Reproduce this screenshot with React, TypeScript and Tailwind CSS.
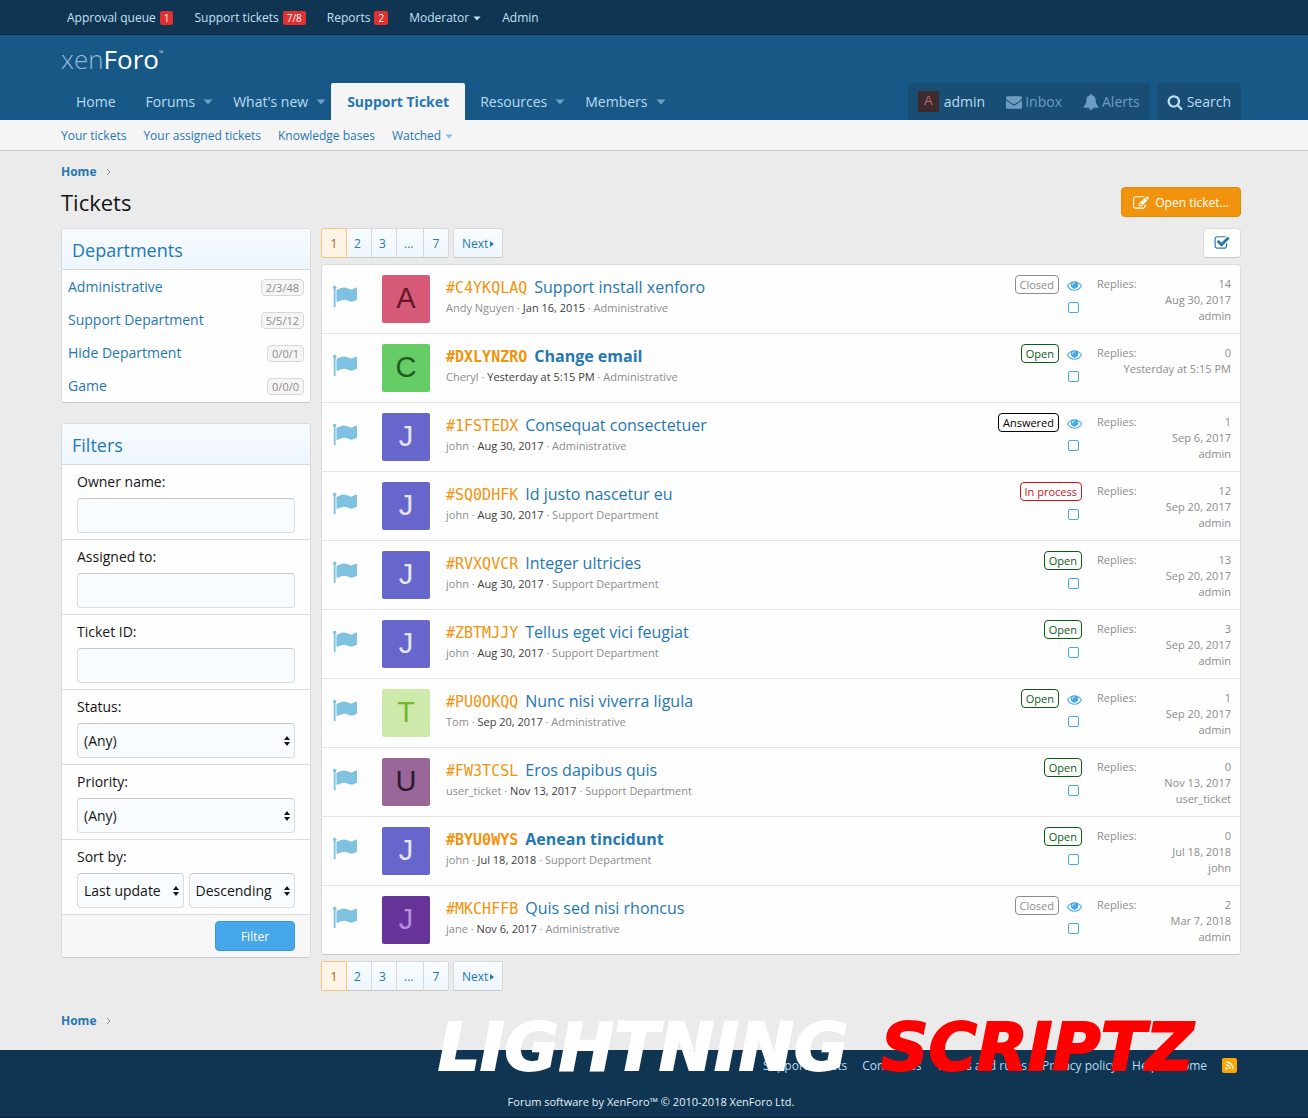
import type { ReactNode } from 'react';
import { clsx } from 'clsx';

const ICONS = {
  flag: 'M320 256q0 72-64 110v1266q0 13-9.5 22.5t-22.5 9.5h-64q-13 0-22.5-9.5t-9.5-22.5v-1266q-64-38-64-110 0-53 37.5-90.5t90.5-37.5 90.5 37.5 37.5 90.5zm1472 64v763q0 25-12.5 38.5t-39.5 27.5q-215 116-369 116-61 0-123.5-22t-108.5-48-115.5-48-142.5-22q-192 0-464 146-17 9-33 9-26 0-45-19t-19-45v-742q0-32 31-55 21-14 79-43 236-120 421-120 107 0 200 29t219 88q38 19 88 19 54 0 117.5-21t110-47 88-47 54.5-21q26 0 45 19t19 45z',
  search: 'M1216 832q0-185-131.5-316.5t-316.5-131.5-316.5 131.5-131.5 316.5 131.5 316.5 316.5 131.5 316.5-131.5 131.5-316.5zm512 832q0 52-38 90t-90 38q-54 0-90-38l-343-342q-179 124-399 124-143 0-273.5-55.5t-225-150-150-225-55.5-273.5 55.5-273.5 150-225 225-150 273.5-55.5 273.5 55.5 225 150 150 225 55.5 273.5q0 220-124 399l343 343q37 37 37 90z',
  edit: 'M888 1184l116-116-152-152-116 116v56h96v96h56zm440-720q-16-16-33 1l-350 350q-17 17-1 33t33-1l350-350q17-17 1-33zm80 594v190q0 119-84.5 203.5t-203.5 84.5h-832q-119 0-203.5-84.5t-84.5-203.5v-832q0-119 84.5-203.5t203.5-84.5h832q63 0 117 25 15 7 18 23 3 17-9 29l-49 49q-14 14-32 8-23-6-45-6h-832q-66 0-113 47t-47 113v832q0 66 47 113t113 47h832q66 0 113-47t47-113v-126q0-13 9-22l64-64q15-15 35-7t20 29zm-96-738l288 288-672 672h-288v-288zm444 132l-92 92-288-288 92-92q28-28 68-28t68 28l152 152q28 28 28 68t-28 68z',
  eye: 'M1664 960q-152-236-381-353 61 104 61 225 0 185-131.5 316.5t-316.5 131.5-316.5-131.5-131.5-316.5q0-121 61-225-229 117-381 353 133 205 333.5 326.5t434.5 121.5 434.5-121.5 333.5-326.5zm-720-384q0-20-14-34t-34-14q-125 0-214.5 89.5t-89.5 214.5q0 20 14 34t34 14 34-14 14-34q0-86 61-147t147-61q20 0 34-14t14-34zm848 384q0 34-20 69-140 230-376.5 368.5t-499.5 138.5-499.5-139-376.5-368q-20-35-20-69t20-69q140-229 376.5-368t499.5-139 499.5 139 376.5 368q20 35 20 69z',
  check: 'M1472 930v318q0 119-84.5 203.5t-203.5 84.5h-832q-119 0-203.5-84.5t-84.5-203.5v-832q0-119 84.5-203.5t203.5-84.5h832q63 0 117 25 15 7 18 23 3 17-9 29l-49 49q-10 10-23 10-3 0-9-2-23-6-45-6h-832q-66 0-113 47t-47 113v832q0 66 47 113t113 47h832q66 0 113-47t47-113v-254q0-13 9-22l64-64q10-10 23-10 6 0 12 3 20 8 20 29zm231-489l-814 814q-24 24-57 24t-57-24l-430-430q-24-24-24-57t24-57l110-110q24-24 57-24t57 24l263 263 647-647q24-24 57-24t57 24l110 110q24 24 24 57t-24 57z',
  envelope: 'M1792 710v794q0 66-47 113t-113 47h-1472q-66 0-113-47t-47-113v-794q44 49 101 87 362 246 497 345 57 42 92.5 65.5t94.5 48 110 24.5h2q51 0 110-24.5t94.5-48 92.5-65.5q170-123 498-345 57-39 100-87zm0-294q0 79-49 151t-122 123q-376 261-468 325-10 7-42.5 31t-54 38.5-52 32.5-57.5 27-50 9h-2q-23 0-50-9t-57.5-27-52-32.5-54-38.5-42.5-31q-91-64-262-182.5t-205-142.5q-62-42-117-115.5t-55-136.5q0-78 41.5-130t118.5-52h1472q65 0 112.5 47t47.5 113z',
  bell: 'M912 1696q0-16-16-16-59 0-101.5-42.5t-42.5-101.5q0-16-16-16t-16 16q0 73 51.5 124.5t124.5 51.5q16 0 16-16zm816-288q0 52-38 90t-90 38h-448q0 106-75 181t-181 75-181-75-75-181h-448q-52 0-90-38t-38-90q50-42 91-88t85-119.5 74.5-158.5 50-206 19.5-260q0-152 117-282.5t307-158.5q-8-19-8-39 0-40 28-68t68-28 68 28 28 68q0 20-8 39 190 28 307 158.5t117 282.5q0 139 19.5 260t50 206 74.5 158.5 85 119.5 91 88z',
};

function Icon({ name, className }: { name: keyof typeof ICONS; className?: string }) {
  return (
    <svg viewBox="0 0 1792 1792" className={clsx('shrink-0 fill-current', className)} aria-hidden="true">
      <path d={ICONS[name]} />
    </svg>
  );
}

function Caret({ className }: { className?: string }) {
  return (
    <svg viewBox="0 0 10 6" className={clsx('shrink-0 fill-current', className)} aria-hidden="true">
      <path d="M0.500 0.500h9L5 5.500z" />
    </svg>
  );
}

// every bar and the body share the same centred column
function Container({ className, children }: { className?: string; children: ReactNode }) {
  return <div className={clsx('mx-auto max-w-[1206px] pl-2.5 pr-4', className)}>{children}</div>;
}

const staffLinks = [
  { label: 'Approval queue', badge: '1' },
  { label: 'Support tickets', badge: '7/8' },
  { label: 'Reports', badge: '2' },
  { label: 'Moderator', caret: true },
  { label: 'Admin' },
];

const navItems = [
  { label: 'Home' },
  { label: 'Forums', caret: true },
  { label: "What's new", caret: true },
  { label: 'Support Ticket', active: true },
  { label: 'Resources', caret: true },
  { label: 'Members', caret: true },
];

const departments = [
  { name: 'Administrative', count: '2/3/48' },
  { name: 'Support Department', count: '5/5/12' },
  { name: 'Hide Department', count: '0/0/1' },
  { name: 'Game', count: '0/0/0' },
];

const avatarStyles = {
  A: 'bg-[#d75a78] text-[#5f1628]',
  C: 'bg-[#66cc66] text-[#1f5c1f]',
  J: 'bg-[#6666cc] text-[#e6e6f8]',
  T: 'bg-[#cdeaab] text-[#70b82f]',
  U: 'bg-[#996699] text-[#2b1b2e]',
  P: 'bg-[#663399] text-[#b98ce0]',
};

const statusStyles = {
  Closed: 'border-[#8c8c8c] text-[#8c8c8c]',
  Open: 'border-[#0a5c14] text-[#0a5c14]',
  Answered: 'border-black text-black',
  'In process': 'border-[#d0121b] text-[#d0121b]',
};

type Ticket = {
  id: string;
  title: string;
  user: string;
  date: string;
  dept: string;
  avatar: keyof typeof avatarStyles;
  status: keyof typeof statusStyles;
  replies: number;
  last: string;
  by?: string;
  unread?: boolean;
  watched?: boolean;
};

const tickets: Ticket[] = [
  { id: 'C4YKQLAQ', title: 'Support install xenforo', user: 'Andy Nguyen', date: 'Jan 16, 2015', dept: 'Administrative', avatar: 'A', status: 'Closed', replies: 14, last: 'Aug 30, 2017', by: 'admin', watched: true },
  { id: 'DXLYNZRO', title: 'Change email', user: 'Cheryl', date: 'Yesterday at 5:15 PM', dept: 'Administrative', avatar: 'C', status: 'Open', replies: 0, last: 'Yesterday at 5:15 PM', unread: true, watched: true },
  { id: '1FSTEDX', title: 'Consequat consectetuer', user: 'john', date: 'Aug 30, 2017', dept: 'Administrative', avatar: 'J', status: 'Answered', replies: 1, last: 'Sep 6, 2017', by: 'admin', watched: true },
  { id: 'SQ0DHFK', title: 'Id justo nascetur eu', user: 'john', date: 'Aug 30, 2017', dept: 'Support Department', avatar: 'J', status: 'In process', replies: 12, last: 'Sep 20, 2017', by: 'admin' },
  { id: 'RVXQVCR', title: 'Integer ultricies', user: 'john', date: 'Aug 30, 2017', dept: 'Support Department', avatar: 'J', status: 'Open', replies: 13, last: 'Sep 20, 2017', by: 'admin' },
  { id: 'ZBTMJJY', title: 'Tellus eget vici feugiat', user: 'john', date: 'Aug 30, 2017', dept: 'Support Department', avatar: 'J', status: 'Open', replies: 3, last: 'Sep 20, 2017', by: 'admin' },
  { id: 'PU0OKQQ', title: 'Nunc nisi viverra ligula', user: 'Tom', date: 'Sep 20, 2017', dept: 'Administrative', avatar: 'T', status: 'Open', replies: 1, last: 'Sep 20, 2017', by: 'admin', watched: true },
  { id: 'FW3TCSL', title: 'Eros dapibus quis', user: 'user_ticket', date: 'Nov 13, 2017', dept: 'Support Department', avatar: 'U', status: 'Open', replies: 0, last: 'Nov 13, 2017', by: 'user_ticket' },
  { id: 'BYU0WYS', title: 'Aenean tincidunt', user: 'john', date: 'Jul 18, 2018', dept: 'Support Department', avatar: 'J', status: 'Open', replies: 0, last: 'Jul 18, 2018', by: 'john', unread: true },
  { id: 'MKCHFFB', title: 'Quis sed nisi rhoncus', user: 'jane', date: 'Nov 6, 2017', dept: 'Administrative', avatar: 'P', status: 'Closed', replies: 2, last: 'Mar 7, 2018', by: 'admin', watched: true },
];

function StaffBar() {
  return (
    <div className="border-b border-[#0b263a] bg-[#0f3552]">
      <Container className="flex h-[34px] items-center gap-[21px] pt-0.5 text-xs text-[#c3e1f5]">
        {staffLinks.map((l, i) => (
          <a key={l.label} href="#" className={clsx('flex items-center gap-1', i === 0 && 'pl-1.5')}>
            {l.label}
            {l.badge && (
              <span className="rounded-xs bg-[#e03030] px-1 text-[10px] leading-[14px] text-white">{l.badge}</span>
            )}
            {l.caret && <Caret className="h-[5px] w-2" />}
          </a>
        ))}
      </Container>
    </div>
  );
}

function Header() {
  return (
    <header className="bg-[#185886]">
      <Container className="flex h-12 items-center">
        <a href="#" className="flex items-start text-[26px] leading-none font-light text-[#8fbadb]">
          xen<span className="font-normal text-white">Foro</span>
          <span className="text-[6px] leading-[14px] text-white">™</span>
        </a>
      </Container>
      <Container className="flex h-[37px] items-stretch justify-between">
        <nav className="flex text-sm text-[#b8dcf3]">
          {navItems.map((n) => (
            <a
              key={n.label}
              href="#"
              className={clsx(
                'flex items-center',
                n.active ? 'rounded-t-xs bg-[#f5f5f5] px-4 font-bold text-[#2577b1]' : 'pl-[15px]',
                n.caret && 'gap-2 pr-[5px]',
                n.label === 'Home' && 'pr-[15px]',
              )}
            >
              {n.label}
              {n.caret && <Caret className="h-[6px] w-[10px] text-[#6fa0c4]" />}
            </a>
          ))}
        </nav>
        <div className="flex gap-[7px] text-sm text-[#b8dcf3]">
          <div className="flex gap-[21px] rounded-t bg-[#184e74] px-2.5">
            <a href="#" className="flex items-center gap-[5px]">
              <span className="flex size-[21px] items-center justify-center bg-[#3d2b2e] font-['Liberation_Sans'] text-[13px] text-[#c0666f]">A</span>
              admin
            </a>
            <a href="#" className="flex items-center gap-[3px] text-[#6d9dc0]"><Icon name="envelope" className="size-4" />Inbox</a>
            <a href="#" className="flex items-center gap-[3px] text-[#6d9dc0]"><Icon name="bell" className="size-4" />Alerts</a>
          </div>
          <a href="#" className="flex items-center gap-1 rounded-t bg-[#184e74] px-2.5"><Icon name="search" className="size-4" />Search</a>
        </div>
      </Container>
    </header>
  );
}

function SubNav() {
  return (
    <div className="border-b border-[#cbcbcb] bg-[#f5f5f5]">
      <Container className="flex h-[30px] items-center gap-[17px] pt-0.5 text-xs text-[#2577b1]">
        <a href="#">Your tickets</a>
        <a href="#">Your assigned tickets</a>
        <a href="#">Knowledge bases</a>
        <a href="#" className="flex items-center gap-1">Watched<Caret className="h-[5px] w-2 text-[#8fb8dc]" /></a>
      </Container>
    </div>
  );
}

function Breadcrumb() {
  return (
    <div className="flex items-center gap-2.5 text-xs leading-5 font-bold text-[#2577b1]">
      <a href="#">Home</a>
      <svg viewBox="0 0 5 8" className="h-2 w-[5px] fill-none stroke-[#8c8c8c]" aria-hidden="true">
        <path d="M1 1l3 3-3 3" />
      </svg>
    </div>
  );
}

function Pagination() {
  const page = 'flex h-7 items-center border-r border-[#d8d8d8] px-[7px] pt-0.5';
  return (
    <nav className="flex gap-1 text-xs text-[#2577b1]">
      <div className="flex rounded-xs border border-[#d8d8d8] border-b-[#c8c8c8] bg-linear-to-b from-[#f8fcff] to-[#edf6fd]">
        <a href="#" className="-m-px flex h-[30px] w-[26px] items-center justify-center rounded-l-xs border border-[#f9c479] bg-[#fff4e5] pt-0.5 text-[#a3611b]">1</a>
        <a href="#" className={clsx(page, 'ml-px w-[25px]')}>2</a>
        <a href="#" className={clsx(page, 'w-[25px]')}>3</a>
        <a href="#" className={clsx(page, 'w-[27px]')}>...</a>
        <a href="#" className="flex h-7 w-6 items-center justify-center pt-0.5">7</a>
      </div>
      <a href="#" className="flex h-[30px] items-center gap-0.5 rounded-xs border border-[#d8d8d8] border-b-[#c8c8c8] bg-linear-to-b from-[#f8fcff] to-[#edf6fd] px-2 pt-0.5">
        Next
        <svg viewBox="0 0 4 6" className="h-1.5 w-1 fill-current" aria-hidden="true"><path d="M0 0l4 3-4 3z" /></svg>
      </a>
    </nav>
  );
}

function Block({ title, children }: { title: string; children: ReactNode }) {
  return (
    <section className="overflow-hidden rounded border border-[#dcdcdc] border-b-[#c8c8c8] bg-[#fefefe]">
      <h2 className="flex h-[41px] items-center border-b border-[#d8d8d8] bg-linear-to-b from-[#f7fbff] to-[#edf6fd] px-2.5 pt-0.5 text-lg text-[#2577b1]">{title}</h2>
      {children}
    </section>
  );
}

const fieldClass = 'h-[35px] w-full rounded border border-[#dcdcdc] border-t-[#c8c8c8] bg-[#f8fcff] px-1.5 text-sm text-[#141414]';

function Select({ id, label, value }: { id?: string; label?: string; value: string }) {
  return (
    <div className="relative flex-1">
      <select id={id} aria-label={label} className={clsx(fieldClass, 'block appearance-none')}>
        <option>{value}</option>
      </select>
      <svg viewBox="0 0 6 10" className="pointer-events-none absolute top-[13px] right-[5px] h-2.5 w-1.5 fill-[#141414]" aria-hidden="true">
        <path d="M0 4h6L3 0zM0 6h6L3 10z" />
      </svg>
    </div>
  );
}

function Field({ id, label, children }: { id: string; label: string; children: ReactNode }) {
  return (
    <div className="h-[75px] border-b border-[#dcdcdc] px-[15px] pt-1.5">
      <label htmlFor={id} className="block h-[27px] text-sm leading-[21px] text-[#141414]">{label}</label>
      {children}
    </div>
  );
}

function Sidebar() {
  return (
    <aside className="flex w-[250px] shrink-0 flex-col gap-5">
      <Block title="Departments">
        <ul className="text-sm text-[#2577b1]">
          {departments.map((d) => (
            <li key={d.name} className="flex h-[33px] items-center justify-between px-1.5">
              <a href="#">{d.name}</a>
              <span className="mt-0.5 rounded border border-[#d8d8d8] bg-[#f5f5f5] px-1 text-[11px] leading-[15px] text-[#8c8c8c]">{d.count}</span>
            </li>
          ))}
        </ul>
      </Block>
      <Block title="Filters">
        <form>
          <Field id="owner" label="Owner name:"><input id="owner" type="text" className={fieldClass} /></Field>
          <Field id="assigned" label="Assigned to:"><input id="assigned" type="text" className={fieldClass} /></Field>
          <Field id="ticket" label="Ticket ID:"><input id="ticket" type="text" className={fieldClass} /></Field>
          <Field id="status" label="Status:"><Select id="status" value="(Any)" /></Field>
          <Field id="priority" label="Priority:"><Select id="priority" value="(Any)" /></Field>
          <Field id="sort" label="Sort by:">
            <div className="flex gap-[5px]">
              <Select id="sort" value="Last update" />
              <Select label="Direction" value="Descending" />
            </div>
          </Field>
          <div className="flex justify-end bg-[#f7f7f7] px-[15px] py-1.5">
            <button type="button" className="h-[30px] w-20 rounded border border-[#3a9ae0] bg-[#47a7eb] pt-0.5 text-xs text-white">Filter</button>
          </div>
        </form>
      </Block>
    </aside>
  );
}

function TicketRow({ t }: { t: Ticket }) {
  return (
    <li className="flex h-[69px] border-b border-[#e4e4e4] pt-2.5 last:h-[68px] last:border-b-0">
      <Icon name="flag" className="mt-[9px] ml-2.5 size-[25px] text-[#7fc1e0]" />
      <a href="#" className={clsx("ml-[25px] flex size-12 shrink-0 items-center justify-center rounded-xs font-['Liberation_Sans'] text-[29px]", avatarStyles[t.avatar])}>
        {t.avatar === 'P' ? 'J' : t.avatar}
      </a>
      <div className="ml-4 min-w-0 flex-1">
        <h3 className={clsx('flex items-baseline gap-[7px] text-base leading-6 text-[#2577b1]', t.unread && 'font-bold')}>
          <span className="font-['DejaVu_Sans_Mono',monospace] text-[15px] text-[#f2930d]">#{t.id}</span>
          <a href="#">{t.title}</a>
        </h3>
        <p className="text-[11px] leading-4 text-[#8c8c8c]">
          {t.user} · <a href="#" className="text-[#3d3d3d]">{t.date}</a> · {t.dept}
        </p>
      </div>
      <div className="flex w-[84px] shrink-0 flex-col items-end pr-px">
        <div className="flex items-center gap-2">
          <span className={clsx('rounded border px-1 text-[11px] leading-[17px] whitespace-nowrap', statusStyles[t.status])}>{t.status}</span>
          {t.watched && <Icon name="eye" className="mt-0.5 size-[15px] text-[#47a7eb]" />}
        </div>
        <input
          type="checkbox"
          aria-label={`Select ${t.title}`}
          className="mt-2 mr-[3px] size-[11px] appearance-none rounded-xs border border-[#47a7eb] bg-white"
        />
      </div>
      <div className="mt-px mr-[9px] ml-[14px] w-[134px] shrink-0 text-right text-[11px] leading-4 text-[#8c8c8c]">
        <dl className="flex justify-between">
          <dt>Replies:</dt>
          <dd>{t.replies}</dd>
        </dl>
        <a href="#" className="block">{t.last}</a>
        {t.by}
      </div>
    </li>
  );
}

function Footer() {
  return (
    <footer className="relative h-[68px] border-b border-[#0a2438] bg-[#0f3552] text-xs text-[#b8dcf3]">
      <Container className="flex h-[31px] items-center justify-end gap-[15px]">
        <a href="#">Support tickets</a>
        <a href="#">Contact us</a>
        <a href="#">Terms and rules</a>
        <a href="#">Privacy policy</a>
        <a href="#">Help</a>
        <a href="#">Home</a>
        <a href="#" aria-label="RSS" className="mr-1">
          <svg viewBox="0 0 15 15" className="size-[15px]" aria-hidden="true">
            <rect width="15" height="15" rx="2" fill="#ffa500" />
            <path d="M4 4a7 7 0 0 1 7 7M4 7a4 4 0 0 1 4 4" fill="none" stroke="#fff" strokeWidth="1.5" />
            <circle cx="4.500" cy="10.500" r="1.200" fill="#fff" />
          </svg>
        </a>
      </Container>
      <p className="pt-3 pr-1.5 text-center text-[11px] leading-[18px] text-[#e3f1fa]">Forum software by XenForo™ © 2010-2018 XenForo Ltd.</p>
      <div className="pointer-events-none absolute -top-9 left-[438px] flex font-['DejaVu_Sans'] text-[66px] leading-[68px] font-bold text-white italic [-webkit-text-stroke:2px]">
        <span className="w-[443px]">LIGHTNING</span>
        <span className="text-[#ff0000]">SCRIPTZ</span>
      </div>
    </footer>
  );
}

export default function App() {
  return (
    <div className="overflow-x-hidden bg-[#ebebeb] font-['Open_Sans','Noto_Sans',sans-serif]">
      <StaffBar />
      <Header />
      <SubNav />
      <Container className="pt-[11px] pb-[19px]">
        <Breadcrumb />
        <div className="mt-[5px] flex items-center justify-between">
          <h1 className="text-[22px] leading-[30px] text-[#141414]">Tickets</h1>
          <a href="#" className="flex h-[30px] items-center gap-1.5 rounded border border-[#e08a0c] bg-[#f2930d] px-[11px] pt-0.5 text-xs text-white">
            <Icon name="edit" className="size-4" />
            Open ticket...
          </a>
        </div>
        <div className="mt-[11px] flex gap-2.5">
          <Sidebar />
          <main className="min-w-0 flex-1">
            <div className="flex justify-between">
              <Pagination />
              <button type="button" aria-label="Select tickets" className="flex h-[30px] w-[38px] items-center justify-center rounded border border-[#dcdcdc] border-b-[#c8c8c8] bg-[#fefefe] text-[#2577b1]">
                <Icon name="check" className="size-4" />
              </button>
            </div>
            <ul className="my-1.5 rounded border border-[#dcdcdc] border-b-[#c8c8c8] bg-[#fefefe]">
              {tickets.map((t) => (
                <TicketRow key={t.id} t={t} />
              ))}
            </ul>
            <Pagination />
          </main>
        </div>
        <div className="mt-5">
          <Breadcrumb />
        </div>
      </Container>
      <Footer />
    </div>
  );
}
